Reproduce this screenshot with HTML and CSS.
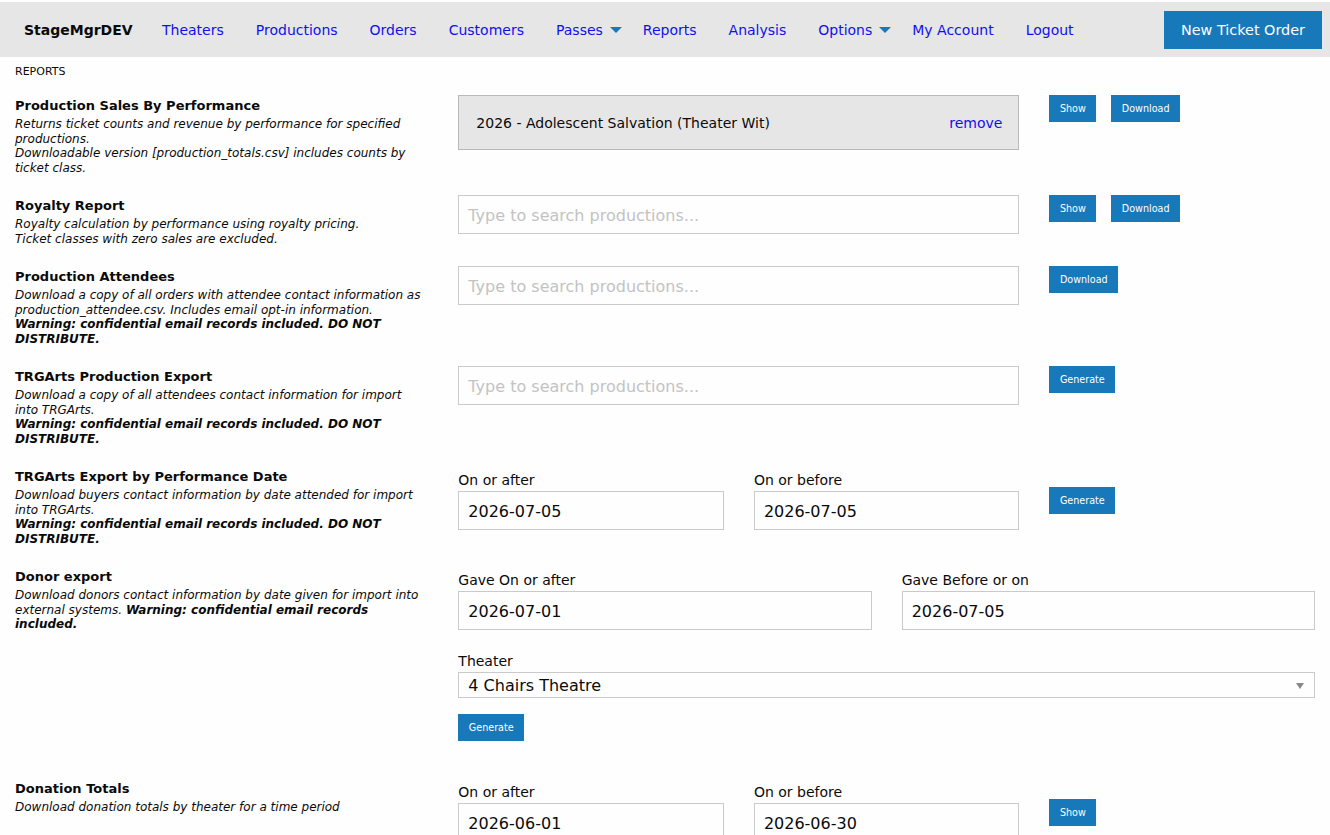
FILE: index.html
```html
<!DOCTYPE html>
<html>
<head>
<meta charset="utf-8">
<title>Reports</title>
<link rel="stylesheet" href="styles.css">
</head>
<body>
<div class="topbar">
  <ul class="menu">
    <li class="brand">StageMgrDEV</li>
    <li><a href="#">Theaters</a></li>
    <li><a href="#">Productions</a></li>
    <li><a href="#">Orders</a></li>
    <li><a href="#">Customers</a></li>
    <li><a href="#" class="dd">Passes</a></li>
    <li><a href="#">Reports</a></li>
    <li><a href="#">Analysis</a></li>
    <li><a href="#" class="dd">Options</a></li>
    <li><a href="#">My Account</a></li>
    <li><a href="#">Logout</a></li>
  </ul>
  <a href="#" class="btn-main">New Ticket Order</a>
</div>

<div class="crumb">REPORTS</div>

<div class="row">
  <div class="col">
    <h4>Production Sales By Performance</h4>
    <p class="desc">Returns ticket counts and revenue by performance for specified productions.<br>Downloadable version [production_totals.csv] includes counts by ticket class.</p>
  </div>
  <div class="col">
    <div class="chosen">
      <span>2026 - Adolescent Salvation (Theater Wit)</span>
      <a href="#" class="remove">remove</a>
    </div>
  </div>
  <div class="col btns">
    <a href="#" class="btn">Show</a>
    <a href="#" class="btn">Download</a>
  </div>
</div>

<div class="row">
  <div class="col">
    <h4>Royalty Report</h4>
    <p class="desc">Royalty calculation by performance using royalty pricing.<br>Ticket classes with zero sales are excluded.</p>
  </div>
  <div class="col">
    <input class="search" type="text" placeholder="Type to search productions...">
  </div>
  <div class="col btns">
    <a href="#" class="btn">Show</a>
    <a href="#" class="btn">Download</a>
  </div>
</div>

<div class="row">
  <div class="col">
    <h4>Production Attendees</h4>
    <p class="desc">Download a copy of all orders with attendee contact information as production_attendee.csv. Includes email opt-in information.<br><b>Warning: confidential email records included. DO NOT DISTRIBUTE.</b></p>
  </div>
  <div class="col">
    <input class="search" type="text" placeholder="Type to search productions...">
  </div>
  <div class="col btns">
    <a href="#" class="btn">Download</a>
  </div>
</div>

<div class="row">
  <div class="col">
    <h4>TRGArts Production Export</h4>
    <p class="desc">Download a copy of all attendees contact information for import into TRGArts.<br><b>Warning: confidential email records included. DO NOT DISTRIBUTE.</b></p>
  </div>
  <div class="col">
    <input class="search" type="text" placeholder="Type to search productions...">
  </div>
  <div class="col btns">
    <a href="#" class="btn">Generate</a>
  </div>
</div>

<div class="row">
  <div class="col">
    <h4>TRGArts Export by Performance Date</h4>
    <p class="desc">Download buyers contact information by date attended for import into TRGArts.<br><b>Warning: confidential email records included. DO NOT DISTRIBUTE.</b></p>
  </div>
  <div class="col pair">
    <label>On or after<input class="field" type="text" value="2026-07-05"></label>
    <label>On or before<input class="field" type="text" value="2026-07-05"></label>
  </div>
  <div class="col btns offset">
    <a href="#" class="btn">Generate</a>
  </div>
</div>

<div class="row">
  <div class="col">
    <h4>Donor export</h4>
    <p class="desc">Download donors contact information by date given for import into external systems. <b>Warning: confidential email records included.</b></p>
  </div>
  <div class="col wide">
    <div class="pair">
      <label>Gave On or after<input class="field" type="text" value="2026-07-01"></label>
      <label>Gave Before or on<input class="field" type="text" value="2026-07-05"></label>
    </div>
    <label>Theater<div class="select">4 Chairs Theatre</div></label>
    <a href="#" class="btn">Generate</a>
  </div>
</div>

<div class="row">
  <div class="col">
    <h4>Donation Totals</h4>
    <p class="desc">Download donation totals by theater for a time period</p>
  </div>
  <div class="col pair">
    <label>On or after<input class="field" type="text" value="2026-06-01"></label>
    <label>On or before<input class="field" type="text" value="2026-06-30"></label>
  </div>
  <div class="col btns offset">
    <a href="#" class="btn">Show</a>
  </div>
</div>
</body>
</html>
```

FILE: styles.css
```css
html, body {
  margin: 0;
  padding: 0;
}
body {
  font-family: "DejaVu Sans", Verdana, sans-serif;
  color: #0a0a0a;
  background: #fefefe;
}

.topbar {
  margin-top: 2px;
  height: 55px;
  background: #e6e6e6;
  display: flex;
  align-items: center;
  justify-content: space-between;
  padding: 0 8px;
}
.menu {
  list-style: none;
  margin: 0;
  padding: 0;
  display: flex;
  align-items: center;
}
.menu li {
  font-size: 14px;
  line-height: 20px;
}
.menu .brand {
  font-weight: bold;
  padding: 0 16px;
  width: 106px;
}
.menu a {
  display: block;
  padding: 0 16px;
  color: #1010ee;
  text-decoration: none;
  position: relative;
}
.menu a.dd {
  padding-right: 24px;
}
.menu a.dd::after {
  content: "";
  position: absolute;
  right: 5px;
  top: 50%;
  margin-top: -3px;
  border-style: solid;
  border-width: 6px 6px 0 6px;
  border-color: #1779ba transparent transparent transparent;
}
.btn-main {
  display: block;
  background: #1779ba;
  color: #fefefe;
  text-decoration: none;
  font-size: 14.4px;
  line-height: 14px;
  padding: 12px 17px;
}

.crumb {
  font-size: 11px;
  line-height: 14px;
  padding: 8px 15px 0;
  margin-bottom: 16px;
}

.row {
  display: grid;
  grid-template-columns: 3fr 4fr 2fr;
  margin-bottom: 20px;
}
.col {
  padding: 0 15px;
  min-width: 0;
}
.col.info {
  padding-right: 19px;
}
.row > .col:first-child {
  padding-right: 19px;
}
.col.wide {
  grid-column: 2 / 4;
}
h4 {
  margin: 0;
  font-size: 13px;
  line-height: 22px;
  font-weight: bold;
}
.desc {
  margin: 0;
  font-size: 12px;
  line-height: 14.5px;
  font-style: italic;
}

.chosen {
  box-sizing: border-box;
  height: 55px;
  background: #e6e6e6;
  border: 1px solid #b9b9b9;
  display: flex;
  align-items: center;
  justify-content: space-between;
  padding: 1px 16px 0 17px;
  font-size: 14px;
}
.chosen .remove {
  color: #1010ee;
  text-decoration: none;
}

input {
  font-family: "DejaVu Sans", Verdana, sans-serif;
}
.search, .field {
  display: block;
  box-sizing: border-box;
  width: 100%;
  height: 39px;
  border: 1px solid #cacaca;
  background: #fefefe;
  padding: 1px 9px 0;
  font-size: 16px;
  color: #0a0a0a;
  margin: 0;
  outline: none;
}
.search::placeholder {
  color: #c3c3c3;
}
.field {
  margin-bottom: 16px;
}
.wide .field {
  margin-bottom: 17px;
}

.pair {
  display: grid;
  grid-template-columns: 1fr 1fr;
  column-gap: 30px;
}
label {
  display: block;
  font-size: 14px;
  line-height: 22px;
  padding-top: 3px;
}
.select {
  position: relative;
  box-sizing: border-box;
  height: 26px;
  border: 1px solid #cacaca;
  background: #fefefe;
  padding: 0 9px;
  font-size: 16px;
  line-height: 25px;
  margin-bottom: 16px;
}
.select::after {
  content: "";
  position: absolute;
  right: 10px;
  top: 10px;
  border-style: solid;
  border-width: 6px 4px 0 4px;
  border-color: #888 transparent transparent transparent;
}

.btns {
  display: flex;
  align-items: flex-start;
  gap: 15px;
}
.btns.offset {
  padding-top: 21px;
}
.btn {
  display: inline-block;
  background: #1779ba;
  color: #fefefe;
  text-decoration: none;
  font-size: 9.6px;
  line-height: 10px;
  padding: 8.5px 10.5px;
  margin-bottom: 16px;
}
.wide .btn {
  margin-bottom: 17px;
}
```
